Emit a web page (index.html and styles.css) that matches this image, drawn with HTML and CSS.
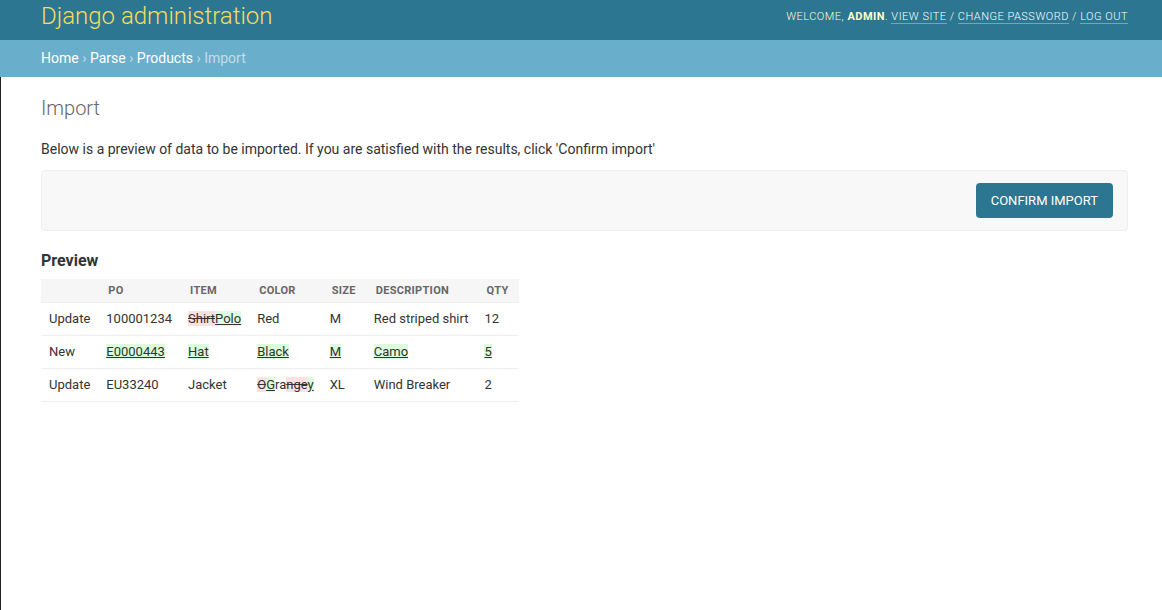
FILE: index.html
```html
<!DOCTYPE html>
<html lang="en">
<head>
<meta charset="utf-8">
<title>Import | Django site admin</title>
<link rel="stylesheet" href="styles.css">
</head>
<body>
<div class="header">
  <div class="branding">Django administration</div>
  <div class="user-tools">
    Welcome, <strong>admin</strong>. <a href="#">View site</a> / <a href="#">Change password</a> / <a href="#">Log out</a>
  </div>
</div>
<div class="breadcrumbs">
  <a href="#">Home</a> <span class="sep">›</span> <a href="#">Parse</a> <span class="sep">›</span> <a href="#">Products</a> <span class="sep">›</span> Import
</div>
<div class="content">
  <h1 class="title">Import</h1>
  <p class="intro">Below is a preview of data to be imported. If you are satisfied with the results, click 'Confirm import'</p>
  <div class="submit-row">
    <button class="btn" type="button">Confirm import</button>
  </div>
  <h2 class="subtitle">Preview</h2>
  <table class="preview">
    <thead>
      <tr><th></th><th>PO</th><th>Item</th><th>Color</th><th>Size</th><th>Description</th><th>QTY</th></tr>
    </thead>
    <tbody>
      <tr>
        <td>Update</td><td>100001234</td><td><del>Shirt</del><ins>Polo</ins></td><td>Red</td><td>M</td><td>Red striped shirt</td><td>12</td>
      </tr>
      <tr>
        <td>New</td><td><ins>E0000443</ins></td><td><ins>Hat</ins></td><td><ins>Black</ins></td><td><ins>M</ins></td><td><ins>Camo</ins></td><td><ins>5</ins></td>
      </tr>
      <tr>
        <td>Update</td><td>EU33240</td><td>Jacket</td><td><del>O</del><ins>G</ins>ra<del>nge</del><ins>y</ins></td><td>XL</td><td>Wind Breaker</td><td>2</td>
      </tr>
    </tbody>
  </table>
</div>
</body>
</html>
```
FILE: styles.css
```css
html, body {
  margin: 0;
  padding: 0;
  height: 100%;
}
body {
  font-family: Roboto, "Liberation Sans", Arial, sans-serif;
  color: #333;
  background: #fff;
  font-size: 13px;
}
.header {
  height: 40px;
  box-sizing: border-box;
  background: #2c7691;
  display: flex;
  align-items: center;
  justify-content: space-between;
  padding: 0 34px 0 41px;
}
.branding {
  font-size: 24px;
  font-weight: 300;
  color: #f5dd5d;
  margin-top: -9px;
}
.user-tools {
  font-size: 11px;
  font-weight: 300;
  letter-spacing: 0.5px;
  text-transform: uppercase;
  color: #ffc;
  margin-top: -8px;
}
.user-tools strong {
  font-weight: 700;
}
.user-tools a {
  color: #fff;
  text-decoration: none;
  border-bottom: 1px solid rgba(255, 255, 255, 0.35);
}
.breadcrumbs {
  background: #69afcc;
  padding: 10px 34px 10px 41px;
  font-size: 14px;
  line-height: 17px;
  color: #c4dce8;
}
.breadcrumbs a {
  color: #fff;
  text-decoration: none;
}
.content {
  border-left: 1px solid #222;
  padding: 20px 34px 20px 40px;
  min-height: calc(100% - 77px);
  box-sizing: border-box;
}
.title {
  margin: 0 0 20px;
  font-size: 20px;
  font-weight: 300;
  color: #666;
  line-height: 23px;
}
.intro {
  margin: 3px 0 12px;
  font-size: 14px;
  line-height: 18px;
}
.submit-row {
  background: #f8f8f8;
  border: 1px solid #eee;
  border-radius: 4px;
  padding: 12px 14px;
  margin: 0 0 20px;
  text-align: right;
}
.btn {
  background: #2c7691;
  color: #fff;
  border: none;
  border-radius: 4px;
  padding: 10px 15px;
  font-family: Roboto, "Liberation Sans", Arial, sans-serif;
  font-size: 13px;
  line-height: 15px;
  text-transform: uppercase;
  cursor: pointer;
}
.subtitle {
  margin: 0 0 9px;
  font-size: 16px;
  font-weight: 700;
  line-height: 19px;
  color: #333;
}
.preview {
  border-collapse: collapse;
  font-size: 13px;
}
.preview th {
  background: #f6f6f6;
  color: #666;
  font-size: 11px;
  font-weight: 700;
  letter-spacing: 0.3px;
  text-transform: uppercase;
  text-align: left;
  padding: 5px 10px;
  line-height: 13px;
  border-bottom: 1px solid #eee;
}
.preview td {
  padding: 8px 8px;
  line-height: 16px;
  border-bottom: 1px solid #eee;
  color: #333;
  white-space: nowrap;
}
.preview ins {
  background: #dcfcdc;
  text-decoration: underline;
}
.preview del {
  background: #fde0e0;
  text-decoration: line-through;
}
```
